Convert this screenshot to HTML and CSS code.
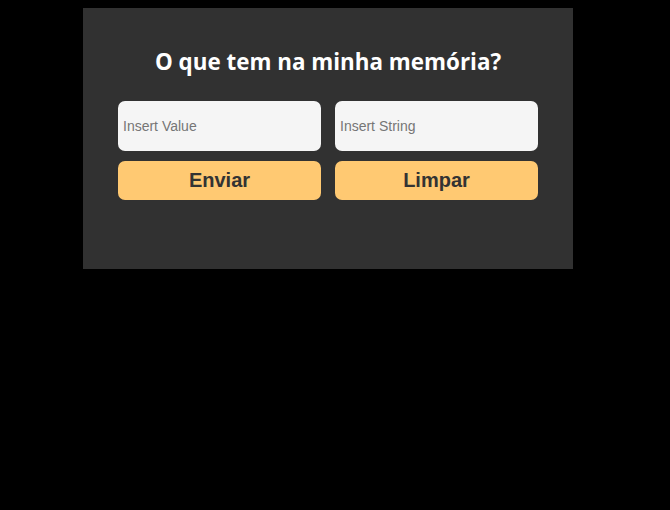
FILE: index.html
```html
<!DOCTYPE html>
<html>
<head>
<meta charset="utf-8">
<link rel="stylesheet" href="styles.css">
</head>
<body>
<div class="panel">
  <h1 class="title">O que tem na minha memória?</h1>
  <div class="grid">
    <input class="field" type="text" placeholder="Insert Value">
    <input class="field" type="text" placeholder="Insert String">
    <button class="btn">Enviar</button>
    <button class="btn">Limpar</button>
  </div>
</div>
</body>
</html>
```
FILE: styles.css
```css
html, body {
  background: #000;
}
body {
  margin: 8px;
}
.panel {
  box-sizing: border-box;
  width: 490px;
  height: 261px;
  margin-left: 75px;
  background: #313131;
  padding: 41px 35px 0;
}
.title {
  margin: 0 0 26px;
  text-align: center;
  color: #fff;
  font-family: "Open Sans", sans-serif;
  font-weight: 700;
  font-size: 22.4px;
  line-height: 26px;
}
.grid {
  display: grid;
  grid-template-columns: 1fr 1fr;
  grid-template-rows: 50px 39px;
  gap: 10px 14px;
}
.field {
  box-sizing: border-box;
  border: none;
  border-radius: 7px;
  background: #f5f5f5;
  padding: 0 5px;
  font-family: "Liberation Sans", Arial, sans-serif;
  font-size: 14px;
  color: #333;
  outline: none;
}
.field::placeholder {
  color: #767676;
}
.btn {
  border: none;
  border-radius: 7px;
  background: #ffc972;
  color: #333;
  font-family: "Liberation Sans", Arial, sans-serif;
  font-weight: 700;
  font-size: 20px;
  padding: 0;
}
```
